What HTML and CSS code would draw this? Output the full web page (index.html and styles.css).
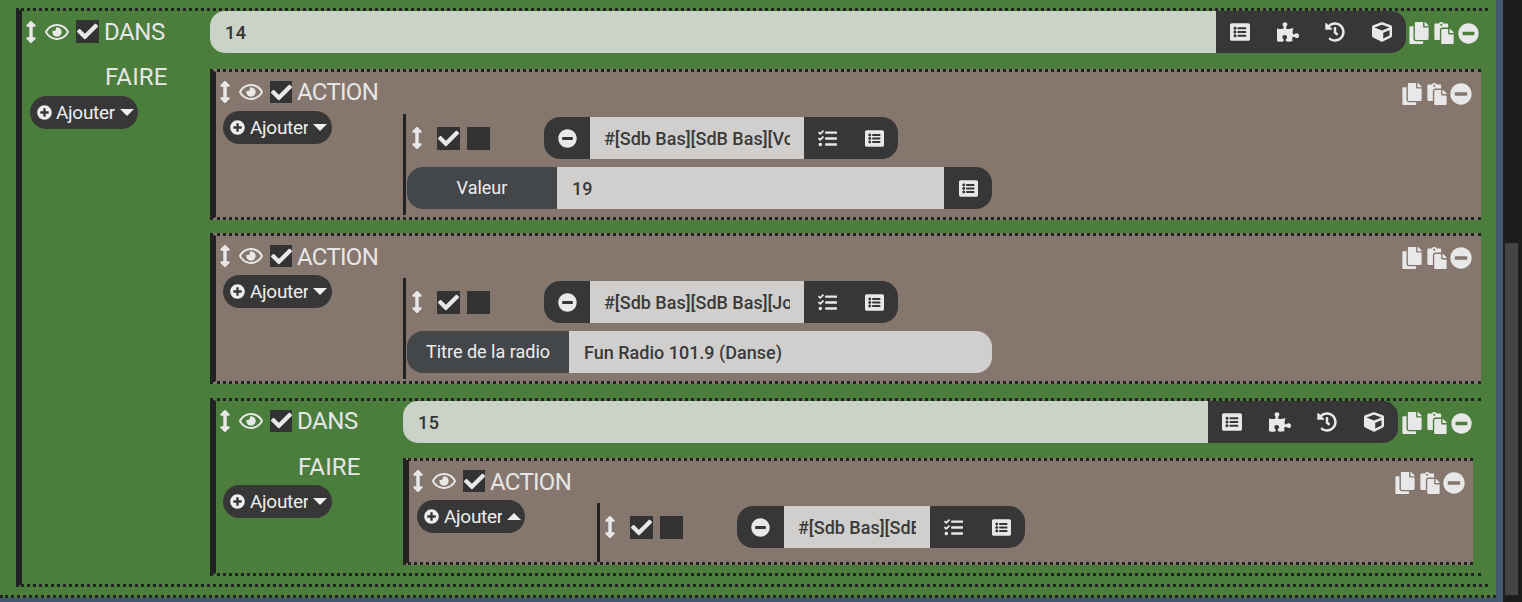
FILE: index.html
```html
<!DOCTYPE html>
<html lang="fr">
<head>
<meta charset="utf-8">
<title>Scénario</title>
<link rel="stylesheet" href="styles.css">
</head>
<body>
<svg class="sprite" xmlns="http://www.w3.org/2000/svg">
<symbol id="i-check" viewBox="0 0 512 512"><path d="M173.898 439.404l-166.4-166.4c-9.997-9.997-9.997-26.206 0-36.204l36.203-36.204c9.997-9.998 26.207-9.998 36.204 0L192 312.69 432.095 72.596c9.997-9.997 26.207-9.997 36.204 0l36.203 36.204c9.997 9.997 9.997 26.206 0 36.204l-294.4 294.401c-9.998 9.997-26.207 9.997-36.204-.001z"/></symbol>
<symbol id="i-plus" viewBox="0 0 512 512"><path d="M256 8C119 8 8 119 8 256s111 248 248 248 248-111 248-248S393 8 256 8zm144 276c0 6.6-5.4 12-12 12h-92v92c0 6.6-5.4 12-12 12h-56c-6.6 0-12-5.4-12-12v-92h-92c-6.6 0-12-5.4-12-12v-56c0-6.6 5.4-12 12-12h92v-92c0-6.6 5.4-12 12-12h56c6.6 0 12 5.4 12 12v92h92c6.6 0 12 5.4 12 12v56z"/></symbol>
<symbol id="i-minus" viewBox="0 0 512 512"><path d="M256 8C119 8 8 119 8 256s111 248 248 248 248-111 248-248S393 8 256 8zM124 296c-6.6 0-12-5.4-12-12v-56c0-6.6 5.4-12 12-12h264c6.6 0 12 5.4 12 12v56c0 6.6-5.4 12-12 12H124z"/></symbol>
<symbol id="i-list" viewBox="0 0 512 512"><path d="M464 480H48c-26.51 0-48-21.49-48-48V80c0-26.51 21.49-48 48-48h416c26.51 0 48 21.49 48 48v352c0 26.51-21.49 48-48 48zM128 120c-22.091 0-40 17.909-40 40s17.909 40 40 40 40-17.909 40-40-17.909-40-40-40zm0 96c-22.091 0-40 17.909-40 40s17.909 40 40 40 40-17.909 40-40-17.909-40-40-40zm0 96c-22.091 0-40 17.909-40 40s17.909 40 40 40 40-17.909 40-40-17.909-40-40-40zm288-136v-32c0-6.627-5.373-12-12-12H204c-6.627 0-12 5.373-12 12v32c0 6.627 5.373 12 12 12h200c6.627 0 12-5.373 12-12zm0 96v-32c0-6.627-5.373-12-12-12H204c-6.627 0-12 5.373-12 12v32c0 6.627 5.373 12 12 12h200c6.627 0 12-5.373 12-12zm0 96v-32c0-6.627-5.373-12-12-12H204c-6.627 0-12 5.373-12 12v32c0 6.627 5.373 12 12 12h200c6.627 0 12-5.373 12-12z"/></symbol>
<symbol id="i-puzzle" viewBox="0 0 576 512"><path d="M519.442 288.651c-41.519 0-59.5 31.593-82.058 31.593C377.409 320.244 432 144 432 144s-196.288 80-196.288-3.297c0-35.827 36.288-46.25 36.288-85.985C272 19.216 243.885 0 210.539 0c-34.654 0-66.366 18.891-66.366 56.346 0 41.364 31.711 59.277 31.711 81.75C175.885 207.719 0 166.758 0 166.758v333.237s178.635 41.047 178.635-28.662c0-22.473-40-40.107-40-81.471 0-37.456 29.25-56.346 63.577-56.346 33.673 0 61.788 19.216 61.788 54.717 0 39.735-36.288 50.158-36.288 85.985 0 60.803 129.675 25.73 181.23 25.73 0 0-34.725-120.101 25.827-120.101 35.962 0 46.423 36.152 86.308 36.152C556.712 416 576 387.99 576 354.443c0-34.199-18.962-65.792-56.558-65.792z"/></symbol>
<symbol id="i-history" viewBox="0 0 512 512"><path d="M504 255.531c.253 136.64-111.18 248.372-247.82 248.468-59.015.042-113.223-20.53-155.822-54.911-11.077-8.94-11.905-25.541-1.839-35.607l11.267-11.267c8.609-8.609 22.353-9.551 31.891-1.984C173.062 425.135 212.781 440 256 440c101.705 0 184-82.311 184-184 0-101.705-82.311-184-184-184-48.814 0-93.149 18.969-126.068 49.932l50.754 50.754c10.08 10.08 2.941 27.314-11.313 27.314H24c-8.837 0-16-7.163-16-16V38.627c0-14.254 17.234-21.393 27.314-11.314l49.372 49.372C129.209 34.136 189.552 8 256 8c136.81 0 247.747 110.78 248 247.531zm-180.912 78.784l9.823-12.63c8.138-10.463 6.253-25.542-4.21-33.679L288 256.349V152c0-13.255-10.745-24-24-24h-16c-13.255 0-24 10.745-24 24v135.651l65.409 50.874c10.463 8.137 25.541 6.253 33.679-4.21z"/></symbol>
<symbol id="i-cube" viewBox="0 0 512 512"><path d="M239.1 6.3l-208 78c-18.7 7-31.1 25-31.1 45v225.1c0 18.2 10.3 34.8 26.5 42.9l208 104c13.5 6.8 29.4 6.8 42.9 0l208-104c16.3-8.1 26.5-24.8 26.5-42.9V129.3c0-20-12.4-37.9-31.1-44.9l-208-78C262 2.2 250 2.2 239.1 6.3zM256 68.4l192 72v1.1l-192 78-192-78v-1.1l192-72zm32 356V275.5l160-65v133.9l-160 80z"/></symbol>
<symbol id="i-copy" viewBox="0 0 448 512"><path d="M320 448v40c0 13.255-10.745 24-24 24H24c-13.255 0-24-10.745-24-24V120c0-13.255 10.745-24 24-24h72v296c0 30.879 25.121 56 56 56h168zm0-344V0H152c-13.255 0-24 10.745-24 24v368c0 13.255 10.745 24 24 24h272c13.255 0 24-10.745 24-24V128H344c-13.2 0-24-10.8-24-24zm120.971-31.029L375.029 7.029A24 24 0 0 0 358.059 0H352v96h96v-6.059a24 24 0 0 0-7.029-16.97z"/></symbol>
<symbol id="i-paste" viewBox="0 0 448 512"><path d="M128 184c0-30.879 25.121-56 56-56h136V56c0-13.255-10.745-24-24-24h-80.61C204.306 12.89 183.637 0 160 0s-44.306 12.89-55.39 32H24C10.745 32 0 42.745 0 56v336c0 13.255 10.745 24 24 24h104V184zm32-144c13.255 0 24 10.745 24 24s-10.745 24-24 24-24-10.745-24-24 10.745-24 24-24zm184 248h104v200c0 13.255-10.745 24-24 24H184c-13.255 0-24-10.745-24-24V184c0-13.255 10.745-24 24-24h136v104c0 13.2 10.8 24 24 24zm104-38.059V256h-96v-96h6.059a24 24 0 0 1 16.97 7.029l65.941 65.941a24.002 24.002 0 0 1 7.03 16.971z"/></symbol>
<symbol id="i-eye" viewBox="0 0 576 512"><path d="M288 144a110.94 110.94 0 0 0-31.24 5 55.4 55.4 0 0 1 7.24 27 56 56 0 0 1-56 56 55.4 55.4 0 0 1-27-7.24A111.71 111.71 0 1 0 288 144zm284.52 97.4C518.29 135.59 410.93 64 288 64S57.68 135.64 3.48 241.41a32.35 32.35 0 0 0 0 29.19C57.71 376.41 165.07 448 288 448s230.32-71.64 284.52-177.41a32.35 32.35 0 0 0 0-29.19zM288 400c-98.65 0-189.09-55-237.93-144C98.91 167 189.34 112 288 112s189.09 55 237.93 144C477.1 345 386.66 400 288 400z"/></symbol>
<symbol id="i-tasks" viewBox="0 0 512 512"><path d="M139.61 35.5a12 12 0 0 0-17 0L58.93 98.81l-22.7-22.12a12 12 0 0 0-17 0L3.53 92.41a12 12 0 0 0 0 17l47.59 47.4a12.78 12.78 0 0 0 17.61 0l15.59-15.62L156.52 69a12.09 12.09 0 0 0 .09-17zm0 159.19a12 12 0 0 0-17 0l-63.68 63.72-22.7-22.1a12 12 0 0 0-17 0L3.53 252a12 12 0 0 0 0 17L51 316.5a12.77 12.77 0 0 0 17.6 0l15.7-15.69 72.2-72.22a12 12 0 0 0 .09-16.9zM64 368c-26.49 0-48.59 21.5-48.59 48S37.53 464 64 464a48 48 0 0 0 0-96zm432 16H208a16 16 0 0 0-16 16v32a16 16 0 0 0 16 16h288a16 16 0 0 0 16-16v-32a16 16 0 0 0-16-16zm0-320H208a16 16 0 0 0-16 16v32a16 16 0 0 0 16 16h288a16 16 0 0 0 16-16V80a16 16 0 0 0-16-16zm0 160H208a16 16 0 0 0-16 16v32a16 16 0 0 0 16 16h288a16 16 0 0 0 16-16v-32a16 16 0 0 0-16-16z"/></symbol>
<symbol id="i-move" viewBox="0 0 256 512"><path d="M214.059 377.941H168V134.059h46.059c21.382 0 32.09-25.851 16.971-40.971L144.971 7.029c-9.373-9.373-24.568-9.373-33.941 0L24.971 93.088c-15.119 15.119-4.411 40.971 16.971 40.971H88v243.882H41.941c-21.382 0-32.09 25.851-16.971 40.971l86.059 86.059c9.373 9.373 24.569 9.373 33.941 0l86.059-86.059c15.12-15.119 4.412-40.971-16.97-40.971z"/></symbol>
</svg>

<div class="app">
  <main class="canvas">
    <section class="block dans dans-top">
      <div class="side">
        <div class="head">
          <svg class="ic move"><use href="#i-move"/></svg>
          <svg class="ic eye"><use href="#i-eye"/></svg>
          <span class="chk"><svg class="ic"><use href="#i-check"/></svg></span>
          <span class="title">DANS</span>
        </div>
        <div class="faire">FAIRE</div>
        <button class="add"><svg class="ic"><use href="#i-plus"/></svg><span class="add-label">Ajouter</span><span class="caret"></span></button>
      </div>
      <div class="main">
        <div class="cond-row">
          <div class="cond">
            <div class="field">14</div>
            <div class="tools">
              <svg class="ic"><use href="#i-list"/></svg>
              <svg class="ic wide"><use href="#i-puzzle"/></svg>
              <svg class="ic"><use href="#i-history"/></svg>
              <svg class="ic"><use href="#i-cube"/></svg>
            </div>
          </div>
          <div class="ops">
            <svg class="ic"><use href="#i-copy"/></svg>
            <svg class="ic"><use href="#i-paste"/></svg>
            <svg class="ic minus"><use href="#i-minus"/></svg>
          </div>
        </div>

        <section class="block action action-1">
          <div class="head">
            <svg class="ic move"><use href="#i-move"/></svg>
            <svg class="ic eye"><use href="#i-eye"/></svg>
            <span class="chk"><svg class="ic"><use href="#i-check"/></svg></span>
            <span class="title">ACTION</span>
            <div class="ops ops-float">
              <svg class="ic"><use href="#i-copy"/></svg>
              <svg class="ic"><use href="#i-paste"/></svg>
              <svg class="ic minus"><use href="#i-minus"/></svg>
            </div>
          </div>
          <div class="body">
            <div class="body-left"><button class="add"><svg class="ic"><use href="#i-plus"/></svg><span class="add-label">Ajouter</span><span class="caret"></span></button></div>
            <div class="cmd">
              <div class="cmd-top">
                <svg class="ic move"><use href="#i-move"/></svg>
                <span class="chk"><svg class="ic"><use href="#i-check"/></svg></span>
                <span class="chk"></span>
                <div class="pill">
                  <span class="pill-btn"><svg class="ic"><use href="#i-minus"/></svg></span>
                  <span class="pill-text">#[Sdb Bas][SdB Bas][Volume]#</span>
                  <span class="pill-tools"><svg class="ic"><use href="#i-tasks"/></svg><svg class="ic"><use href="#i-list"/></svg></span>
                </div>
              </div>
              <div class="opt">
                <span class="opt-label opt-label-value">Valeur</span>
                <span class="opt-value">19</span>
                <span class="opt-tool"><svg class="ic"><use href="#i-list"/></svg></span>
              </div>
            </div>
          </div>
        </section>

        <section class="block action action-2">
          <div class="head">
            <svg class="ic move"><use href="#i-move"/></svg>
            <svg class="ic eye"><use href="#i-eye"/></svg>
            <span class="chk"><svg class="ic"><use href="#i-check"/></svg></span>
            <span class="title">ACTION</span>
            <div class="ops ops-float">
              <svg class="ic"><use href="#i-copy"/></svg>
              <svg class="ic"><use href="#i-paste"/></svg>
              <svg class="ic minus"><use href="#i-minus"/></svg>
            </div>
          </div>
          <div class="body">
            <div class="body-left"><button class="add"><svg class="ic"><use href="#i-plus"/></svg><span class="add-label">Ajouter</span><span class="caret"></span></button></div>
            <div class="cmd">
              <div class="cmd-top">
                <svg class="ic move"><use href="#i-move"/></svg>
                <span class="chk"><svg class="ic"><use href="#i-check"/></svg></span>
                <span class="chk"></span>
                <div class="pill">
                  <span class="pill-btn"><svg class="ic"><use href="#i-minus"/></svg></span>
                  <span class="pill-text">#[Sdb Bas][SdB Bas][Jouer]#</span>
                  <span class="pill-tools"><svg class="ic"><use href="#i-tasks"/></svg><svg class="ic"><use href="#i-list"/></svg></span>
                </div>
              </div>
              <div class="opt">
                <span class="opt-label">Titre de la radio</span>
                <span class="opt-value">Fun Radio 101.9 (Danse)</span>
              </div>
            </div>
          </div>
        </section>

        <section class="block dans dans-sub">
          <div class="side">
            <div class="head">
              <svg class="ic move"><use href="#i-move"/></svg>
              <svg class="ic eye"><use href="#i-eye"/></svg>
              <span class="chk"><svg class="ic"><use href="#i-check"/></svg></span>
              <span class="title">DANS</span>
            </div>
            <div class="faire">FAIRE</div>
            <button class="add"><svg class="ic"><use href="#i-plus"/></svg><span class="add-label">Ajouter</span><span class="caret"></span></button>
          </div>
          <div class="main">
            <div class="cond-row">
              <div class="cond">
                <div class="field">15</div>
                <div class="tools">
                  <svg class="ic"><use href="#i-list"/></svg>
                  <svg class="ic wide"><use href="#i-puzzle"/></svg>
                  <svg class="ic"><use href="#i-history"/></svg>
                  <svg class="ic"><use href="#i-cube"/></svg>
                </div>
              </div>
              <div class="ops">
                <svg class="ic"><use href="#i-copy"/></svg>
                <svg class="ic"><use href="#i-paste"/></svg>
                <svg class="ic minus"><use href="#i-minus"/></svg>
              </div>
            </div>

            <section class="block action action-3">
              <div class="head">
                <svg class="ic move"><use href="#i-move"/></svg>
                <svg class="ic eye"><use href="#i-eye"/></svg>
                <span class="chk"><svg class="ic"><use href="#i-check"/></svg></span>
                <span class="title">ACTION</span>
                <div class="ops ops-float">
                  <svg class="ic"><use href="#i-copy"/></svg>
                  <svg class="ic"><use href="#i-paste"/></svg>
                  <svg class="ic minus"><use href="#i-minus"/></svg>
                </div>
              </div>
              <div class="body">
                <div class="body-left"><button class="add"><svg class="ic"><use href="#i-plus"/></svg><span class="add-label">Ajouter</span><span class="caret caret-up"></span></button></div>
                <div class="cmd">
                  <div class="cmd-top">
                    <svg class="ic move"><use href="#i-move"/></svg>
                    <span class="chk"><svg class="ic"><use href="#i-check"/></svg></span>
                    <span class="chk"></span>
                    <div class="pill pill-short">
                      <span class="pill-btn"><svg class="ic"><use href="#i-minus"/></svg></span>
                      <span class="pill-text">#[Sdb Bas][SdB Bas][Volume]#</span>
                      <span class="pill-tools"><svg class="ic"><use href="#i-tasks"/></svg><svg class="ic"><use href="#i-list"/></svg></span>
                    </div>
                  </div>
                </div>
              </div>
            </section>
          </div>
        </section>
      </div>
    </section>
    <div class="canvas-end"></div>
  </main>
  <aside class="scrollbar"><div class="thumb"></div></aside>
</div>
</body>
</html>
```
FILE: styles.css
```css
* { box-sizing: border-box; }
html, body { margin: 0; height: 100%; overflow: hidden; }
body { background: #1d1d1d; font-family: Roboto, "Liberation Sans", sans-serif; color: #e8e8e8; }
.sprite { display: none; }
.ic { width: 18px; height: 18px; fill: currentColor; display: block; flex: none; }

.app { display: flex; height: 602px; }
.canvas { width: 1503px; height: 602px; background: #4b7d3c; border-right: 7px solid #43586f; border-bottom: 4px solid #43586f; padding: 8px 8px 0 16px; overflow: hidden; }
.canvas-end { margin: 8px -8px 0 -16px; border-top: 3px dotted #222; }
.scrollbar { flex: 1; padding: 243px 4px 7px 2px; }
.thumb { height: 100%; background: #444; }

.block { border-left: 6px solid #222; border-top: 3px dotted #222; border-bottom: 3px dotted #222; }
.dans { display: grid; }
.dans-top { grid-template-columns: 188px 1fr; height: 579px; padding-right: 7px; }
.dans-sub { grid-template-columns: 187px 1fr; height: 178px; margin-top: 14px; padding-right: 8px; }
.action { position: relative; background: #85766e; }
.action-1 { height: 151px; margin-top: 16px; }
.action-2 { height: 151px; margin-top: 13px; }
.action-3 { height: 107px; margin-top: 15px; }

.side { min-width: 0; }
.dans-sub > .side { margin-top: -1px; }
.main { min-width: 0; }
.head { display: flex; align-items: center; height: 41px; padding-left: 3px; }
.action > .head { height: 39px; padding-top: 1px; }
.move { width: 12px; height: 22px; margin-right: 8px; }
.eye { width: 24px; height: 22px; margin-right: 7px; }
.chk { width: 23px; height: 23px; background: #333; display: flex; align-items: center; justify-content: center; flex: none; }
.chk .ic { width: 21px; height: 21px; }
.action > .head .chk, .dans-sub > .side .chk { width: 22px; height: 22px; }
.title { font-size: 24px; margin-left: 5px; letter-spacing: -0.4px; line-height: 28px; color: #e6e6e6; }
.action .title { letter-spacing: -0.7px; }
.action-2 .title, .action-3 .title { margin-top: 2px; }
.faire { font-size: 24px; letter-spacing: 0.1px; line-height: 28px; height: 28px; margin: 11px 0 5px 83px; color: #e6e6e6; }
.dans-sub > .side > .faire { margin: 12px 0 4px 82px; }

.add { display: inline-flex; align-items: center; height: 33px; width: 109px; padding: 0 0 0 7px; border: 0; border-radius: 17px; background: #373737; color: #eee; font: 19px Roboto, sans-serif; letter-spacing: -0.3px; }
.side .add { margin-left: 7px; }
.dans-top > .side .add { margin-left: 8px; width: 108px; }
.add .ic { width: 15px; height: 15px; margin-right: 5px; flex: none; }
.dans-top > .side .add .ic { margin-right: 4px; }
.dans-top > .side .add-label { width: 59px; }
.add-label { width: 58px; overflow: hidden; white-space: nowrap; text-align: left; flex: none; }
.caret { width: 0; height: 0; border-left: 7px solid transparent; border-right: 7px solid transparent; border-top: 7px solid #eee; margin-left: 5px; }
.caret-up { border-top: 0; border-bottom: 7px solid #eee; }

.cond-row { display: flex; height: 42px; }
.cond { flex: 1; display: flex; border-radius: 15px; overflow: hidden; min-width: 0; }
.field { flex: 1; background: #cbd2c8; color: #333; font-size: 18px; line-height: 44px; padding-left: 15px; font-weight: 500; letter-spacing: .5px; }
.tools { width: 190px; background: #373737; display: flex; align-items: center; justify-content: space-between; padding: 0 14px; }
.tools .ic { width: 20px; height: 20px; }
.tools .wide { width: 22px; }
.ops { width: 75px; flex: none; display: flex; align-items: center; padding: 2px 0 0 3px; }
.dans-sub > .main > .cond-row > .ops { padding-left: 4px; }
.ops .ic { width: 20px; height: 22px; margin-right: 5px; }
.ops .minus { width: 21px; height: 21px; margin: 0 0 0 -1px; }
.ops-float { position: absolute; top: 11px; right: 9px; width: auto; padding: 0; }
.ops-float .minus { width: 22px; height: 22px; margin-left: -2px; }
.action-3 .ops-float { right: 8px; }

.body { display: flex; }
.body-left { width: 187px; flex: none; padding-left: 7px; }
.action-3 .body-left { width: 188px; padding-left: 8px; }
.action-3 .add { width: 108px; }
.cmd { flex: 1; border-left: 3px solid #222; margin-top: 3px; padding: 3px 0 6px 1px; min-width: 0; }
.cmd-top { display: flex; align-items: center; height: 42px; margin-bottom: 8px; padding-left: 4px; }
.action-3 .cmd-top { padding-left: 3px; }
.cmd-top .move { margin-right: 14px; }
.cmd-top .chk { margin-right: 7px; }
.pill { display: flex; height: 42px; width: 354px; margin-left: 47px; border-radius: 16px; overflow: hidden; background: #373737; }
.pill-short { width: 288px; }
.pill-btn { width: 46px; flex: none; display: flex; align-items: center; justify-content: center; }
.pill-short .pill-btn { width: 47px; }
.pill-btn .ic { width: 19px; height: 19px; }
.pill-text { flex: 1; min-width: 0; background: #d0cfcd; color: #3a3a3a; font-size: 18px; font-weight: 500; line-height: 44px; padding: 0 14px; white-space: nowrap; overflow: clip; overflow-clip-margin: content-box; }
.pill-tools { width: 94px; flex: none; display: flex; align-items: center; justify-content: space-between; padding: 0 14px; }
.pill-short .pill-tools { width: 95px; }
.pill-tools .ic { width: 19px; height: 19px; }
.opt { display: flex; height: 42px; width: 585px; border-radius: 16px; overflow: hidden; }
.opt-label { background: #44474a; color: #eee; font-size: 18px; line-height: 42px; width: 162px; text-align: center; flex: none; white-space: nowrap; }
.opt-label-value { width: 150px; }
.opt-value { flex: 1; background: #d0cfcd; color: #3a3a3a; font-size: 18px; font-weight: 500; line-height: 44px; padding-left: 15px; }
.opt-tool { width: 48px; background: #373737; display: flex; align-items: center; justify-content: center; }
.opt-tool .ic { width: 19px; height: 19px; }
```
